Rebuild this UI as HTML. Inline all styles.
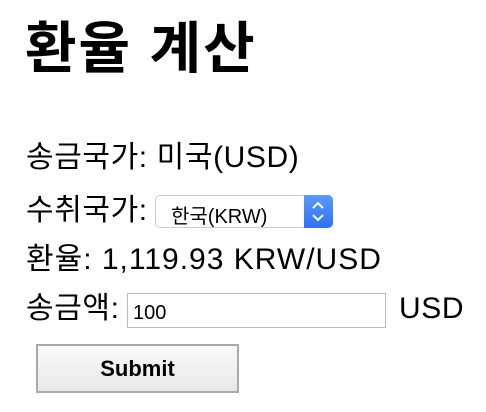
<!DOCTYPE html>
<html><head><meta charset="utf-8"><style>
body{margin:0;width:486px;height:412px;background:#fff;font-family:"Liberation Sans","Noto Sans CJK KR",sans-serif;color:#000;position:relative;overflow:hidden}
.a{position:absolute;white-space:nowrap}
h1{position:absolute;left:25px;top:16px;margin:0;font-size:56px;font-weight:bold;line-height:66px;letter-spacing:2px}
.t{font-size:30px;line-height:32px;letter-spacing:0.6px}
.sel{position:absolute;left:155px;top:195px;width:178px;height:33px;border:1px solid #ccc;border-radius:5px;box-sizing:border-box;background:#fff;font-size:20px}
.sel span{position:absolute;left:15px;top:4px}
.sel .b{position:absolute;right:-1px;top:-1px;width:29px;height:33px;background:linear-gradient(#5a9bff,#2f6ff5);border-radius:0 5px 5px 0}
.inp{position:absolute;left:127px;top:293px;width:259px;height:35px;border:1px solid #bbb;box-sizing:border-box;font-size:20px;padding:8px 0 0 5px}
.btn{position:absolute;left:36px;top:344px;width:203px;height:49px;border:2px solid #aaa;box-sizing:border-box;background:linear-gradient(#fafafa,#e8e8e8);font-size:22px;font-weight:bold;text-align:center;line-height:45px}
</style></head><body>
<h1>환율 계산</h1>
<div class="a t" style="left:26px;top:142px">송금국가: 미국(USD)</div>
<div class="a t" style="left:26px;top:195px">수취국가:</div>
<div class="sel"><span>한국(KRW)</span><div class="b"><svg width="29" height="33" viewBox="0 0 29 33"><path d="M9 13l5-5 5 5M9 20l5 5 5-5" stroke="#fff" stroke-width="2" fill="none"/></svg></div></div>
<div class="a t" style="left:26px;top:244px;letter-spacing:1px">환율: 1,119.93 KRW/USD</div>
<div class="a t" style="left:26px;top:293px">송금액:</div>
<div class="inp">100</div>
<div class="a t" style="left:399px;top:293px">USD</div>
<div class="btn">Submit</div>
</body></html>
